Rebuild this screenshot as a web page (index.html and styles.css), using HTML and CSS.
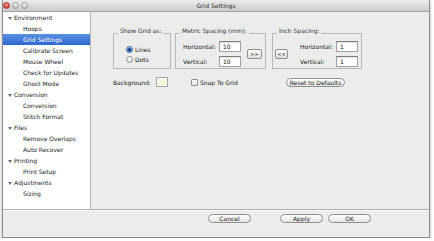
FILE: index.html
```html
<!DOCTYPE html>
<html>
<head>
<meta charset="utf-8">
<title>Grid Settings</title>
<link rel="stylesheet" href="styles.css">
</head>
<body>
<div class="window">
  <div class="titlebar">
    <div class="lights"><span class="light red"></span><span class="light"></span><span class="light"></span></div>
    <div class="title">Grid Settings</div>
    <div></div>
  </div>
  <div class="body">
    <ul class="sidebar">
      <li class="item cat"><span class="tri"></span>Environment</li>
      <li class="item">Hoops</li>
      <li class="item sel">Grid Settings</li>
      <li class="item">Calibrate Screen</li>
      <li class="item">Mouse Wheel</li>
      <li class="item">Check for Updates</li>
      <li class="item">Ghost Mode</li>
      <li class="item cat"><span class="tri"></span>Conversion</li>
      <li class="item">Conversion</li>
      <li class="item">Stitch Format</li>
      <li class="item cat"><span class="tri"></span>Files</li>
      <li class="item">Remove Overlaps</li>
      <li class="item">Auto Recover</li>
      <li class="item cat"><span class="tri"></span>Printing</li>
      <li class="item">Print Setup</li>
      <li class="item cat"><span class="tri"></span>Adjustments</li>
      <li class="item">Sizing</li>
    </ul>
    <div class="main">
      <div class="groups">
        <fieldset class="group g-show">
          <legend>Show Grid as:</legend>
          <div class="radios">
            <div class="radio-row"><span class="radio on"></span><span>Lines</span></div>
            <div class="radio-row"><span class="radio"></span><span>Dots</span></div>
          </div>
        </fieldset>
        <fieldset class="group g-metric">
          <legend>Metric Spacing (mm):</legend>
          <div class="spacing metric">
            <div class="fields">
              <div class="field"><label>Horizontal:</label><input class="input" value="10"></div>
              <div class="field"><label>Vertical:</label><input class="input" value="10"></div>
            </div>
            <button class="arrow arrow-r">&gt;&gt;</button>
          </div>
        </fieldset>
        <fieldset class="group g-inch">
          <legend>Inch Spacing:</legend>
          <div class="spacing inch">
            <button class="arrow arrow-l">&lt;&lt;</button>
            <div class="fields">
              <div class="field"><label>Horizontal:</label><input class="input" value="1"></div>
              <div class="field"><label>Vertical:</label><input class="input" value="1"></div>
            </div>
          </div>
        </fieldset>
      </div>
      <div class="row2">
        <span class="bg-label">Background:</span>
        <span class="swatch"></span>
        <span class="check"></span>
        <span class="snap-label">Snap To Grid</span>
        <button class="pill reset">Reset to Defaults</button>
      </div>
    </div>
  </div>
  <div class="footer">
    <button class="pill cancel">Cancel</button>
    <button class="pill apply">Apply</button>
    <button class="pill ok">OK</button>
  </div>
</div>
</body>
</html>
```

FILE: styles.css
```css
body {
  margin: 0;
  background: #ffffff;
  font-family: "DejaVu Sans", "Liberation Sans", sans-serif;
  font-size: 6px;
  color: #1a1a1a;
}

.window {
  margin-left: 2px;
  width: 428px;
  height: 238px;
  box-sizing: border-box;
  border: 1px solid #8c8c8c;
  border-top: none;
  background: #ececec;
  box-shadow: 0 1px 3px rgba(0, 0, 0, 0.35);
  display: flex;
  flex-direction: column;
}

.titlebar {
  height: 12px;
  box-sizing: border-box;
  border-bottom: 1px solid #a3a3a3;
  background: linear-gradient(#ececec, #cbcbcb);
  display: grid;
  grid-template-columns: 40px 1fr 40px;
  align-items: center;
}

.lights {
  display: flex;
  gap: 2px;
}

.light {
  width: 7px;
  height: 7px;
  border-radius: 50%;
  box-sizing: border-box;
  border: 1px solid #9c9c9c;
  background: linear-gradient(#f6f6f6, #c2c2c2);
}

.light.red {
  border-color: #a8352c;
  background: radial-gradient(circle at 50% 35%, #f6a59c, #d63a2f 75%);
}

.title {
  text-align: center;
  color: #2b2b2b;
  line-height: 11px;
}

.body {
  display: flex;
  height: 197px;
}

.sidebar {
  width: 88px;
  flex: none;
  box-sizing: border-box;
  background: #ffffff;
  border-right: 1px solid #b3b3b3;
  margin: 0;
  padding: 0;
  list-style: none;
}

.item {
  height: 11px;
  line-height: 11px;
  padding-left: 20px;
  white-space: nowrap;
  color: #1c1c1c;
}

.item.cat {
  padding-left: 5px;
}

.tri {
  display: inline-block;
  width: 0;
  height: 0;
  border-left: 2px solid transparent;
  border-right: 2px solid transparent;
  border-top: 3px solid #6b6f78;
  margin-right: 2px;
  vertical-align: middle;
}

.item.sel {
  background: linear-gradient(#5b90e0, #2e67cf);
  color: #ffffff;
}

.main {
  flex: 1;
  padding: 15px 0 0 22px;
}

.groups {
  display: flex;
  align-items: flex-start;
}

.group {
  margin: 0;
  padding: 0;
  min-width: 0;
  box-sizing: border-box;
  border: 1px solid #b9b9b9;
}

.group legend {
  padding: 0 2px 5px;
  margin-left: 4px;
  font-size: 6px;
  line-height: 8px;
  color: #333333;
}

.g-show {
  width: 58px;
}

.g-metric {
  width: 91px;
  margin-left: 4px;
}

.g-inch {
  width: 90px;
  margin-left: 6px;
}

.radios {
  padding: 4px 0 4px 12px;
}

.radio-row {
  display: flex;
  align-items: center;
  gap: 2px;
  height: 10px;
}

.radio {
  width: 7px;
  height: 7px;
  box-sizing: border-box;
  border-radius: 50%;
  border: 1px solid #8d8d8d;
  background: linear-gradient(#ffffff, #dedede);
}

.radio.on {
  border-color: #3b64a4;
  background: radial-gradient(circle, #17335f 0 1.1px, transparent 1.6px), linear-gradient(#a9cbf3, #3c7ad6);
}

.spacing {
  display: flex;
  align-items: center;
  padding: 1px 3px 1px 7px;
}

.spacing.inch {
  padding-left: 2px;
}

.fields {
  display: flex;
  flex-direction: column;
  gap: 4px;
}

.inch .fields {
  margin-left: 12px;
}

.field {
  display: flex;
  align-items: center;
  height: 11px;
}

.field label {
  width: 36px;
  color: #1a1a1a;
}

.input {
  width: 22px;
  height: 11px;
  margin: 0;
  box-sizing: border-box;
  border: 1px solid #a0a0a0;
  border-top-color: #7c7c7c;
  background: #ffffff;
  padding: 0 0 0 3px;
  font-family: inherit;
  font-size: 6px;
  color: #111111;
  box-shadow: inset 0 1px 1px rgba(0, 0, 0, 0.12);
}

.arrow {
  height: 10px;
  margin: 0;
  padding: 0;
  box-sizing: border-box;
  border: 1px solid #8e8e8e;
  border-radius: 2px;
  background: linear-gradient(#ffffff, #e0e0e0);
  font-family: inherit;
  font-size: 5px;
  line-height: 8px;
  color: #222222;
  text-align: center;
}

.arrow-r {
  width: 15px;
  margin-left: 6px;
}

.arrow-l {
  width: 13px;
}

.row2 {
  display: flex;
  align-items: center;
  height: 10px;
  margin-top: 8px;
}

.bg-label {
  width: 43px;
}

.swatch {
  width: 12px;
  height: 10px;
  box-sizing: border-box;
  border: 1px solid #a5a5a5;
  background: #f7f7d6;
  box-shadow: inset 0 0 0 1px #ffffff;
}

.check {
  width: 7px;
  height: 7px;
  margin-left: 23px;
  box-sizing: border-box;
  border: 1px solid #8d8d8d;
  border-radius: 1px;
  background: linear-gradient(#ffffff, #e0e0e0);
}

.snap-label {
  width: 86px;
  margin-left: 2px;
}

.pill {
  height: 9px;
  margin: 0;
  padding: 0;
  box-sizing: border-box;
  border: 1px solid #919191;
  border-radius: 5px;
  background: linear-gradient(#ffffff, #e3e3e3);
  font-family: inherit;
  font-size: 6px;
  line-height: 7px;
  color: #1e1e1e;
  text-align: center;
}

.reset {
  width: 59px;
}

.footer {
  height: 28px;
  box-sizing: border-box;
  border-top: 1px solid #b2b2b2;
  box-shadow: inset 0 1px 0 #f8f8f8;
  display: flex;
  align-items: flex-start;
  padding: 4px 0 0 205px;
}

.cancel,
.apply,
.ok {
  width: 43px;
}

.cancel {
  margin-right: 29px;
}

.apply {
  margin-right: 5px;
}
```
